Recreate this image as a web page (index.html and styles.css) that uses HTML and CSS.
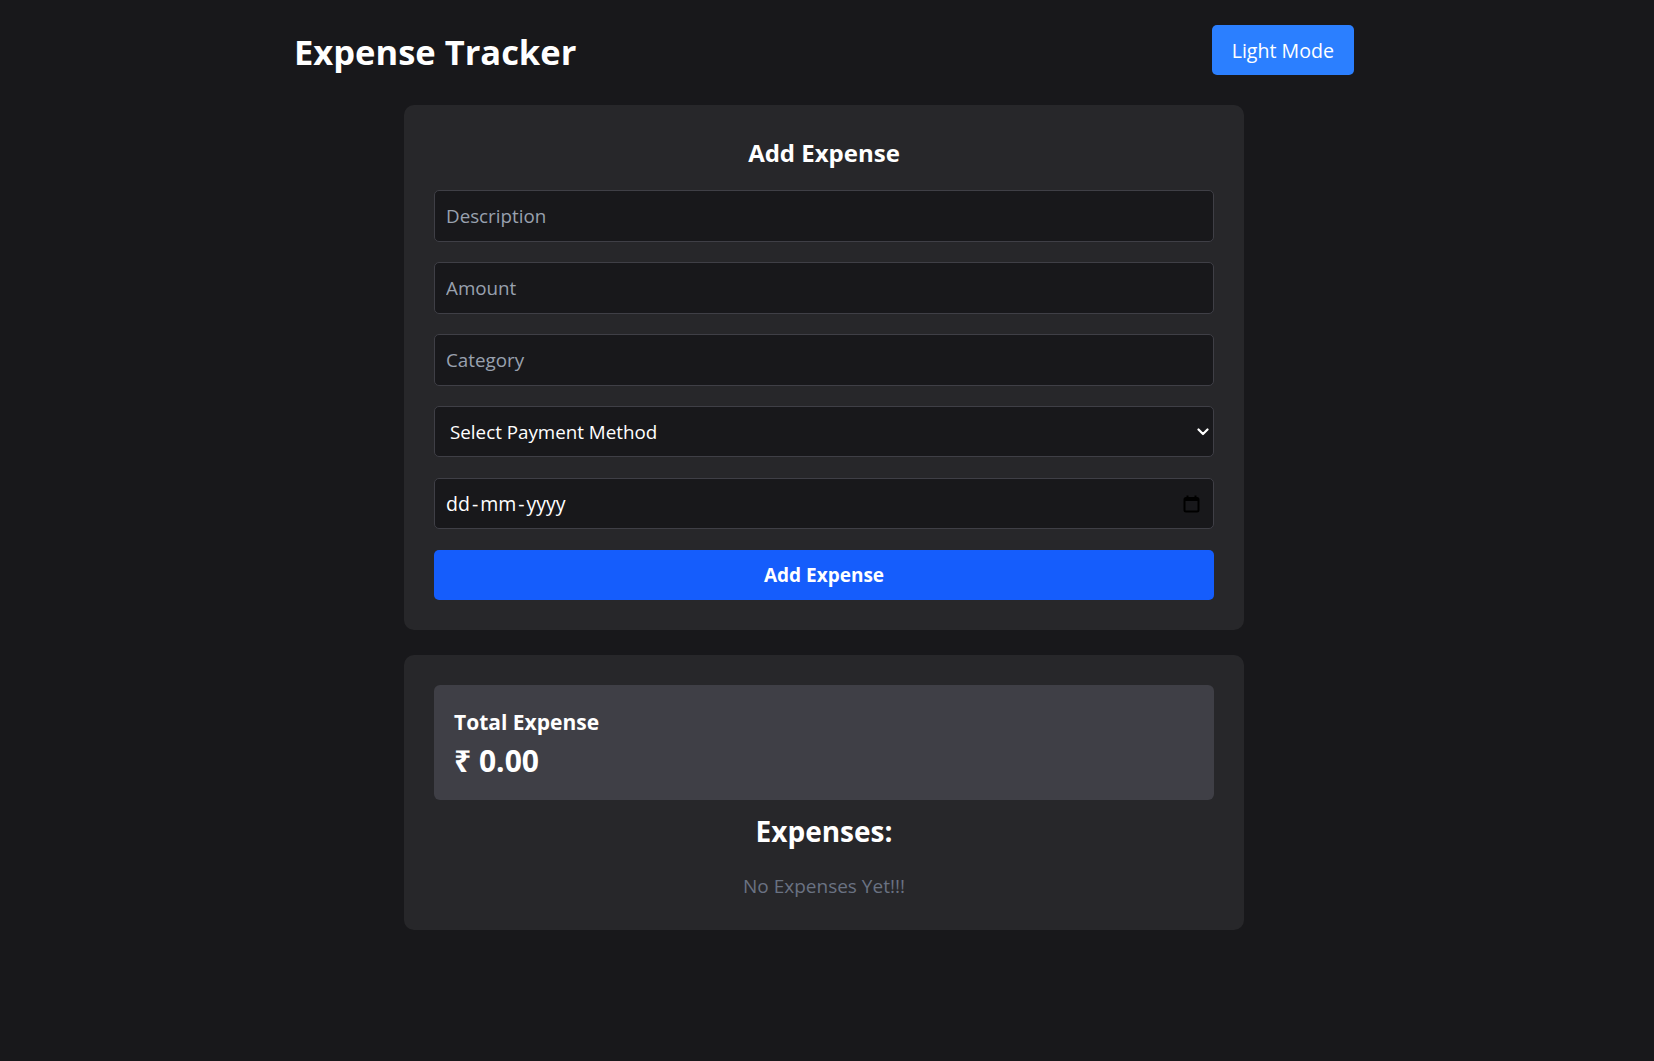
FILE: index.html
```html
<!DOCTYPE html>
<html lang="en">
<head>
<meta charset="utf-8">
<title>Expense Tracker</title>
<link rel="stylesheet" href="styles.css">
</head>
<body>
<div class="page">
  <header class="topbar">
    <h1 class="title">Expense Tracker</h1>
    <button class="mode-btn" type="button">Light Mode</button>
  </header>

  <section class="card form-card">
    <h2 class="card-title">Add Expense</h2>
    <input class="field" type="text" placeholder="Description">
    <input class="field" type="text" placeholder="Amount">
    <input class="field" type="text" placeholder="Category">
    <div class="field select-field">
      <span>Select Payment Method</span>
      <svg class="chev" width="12" height="8" viewBox="0 0 12 8"><path d="M1.5 1.5 L6 6 L10.5 1.5" fill="none" stroke="#fff" stroke-width="2.2" stroke-linecap="round" stroke-linejoin="round"/></svg>
    </div>
    <div class="field date-field">
      <span class="date-text">dd<span class="sep">-</span>mm<span class="sep">-</span>yyyy</span>
      <svg class="cal" width="17" height="18" viewBox="0 0 17 18"><rect x="1.5" y="3" width="14" height="13.5" rx="1.5" fill="none" stroke="#000" stroke-width="2"/><rect x="1.5" y="3" width="14" height="3" fill="#000"/><rect x="3.5" y="0.5" width="2" height="3.5" fill="#000"/><rect x="11.5" y="0.5" width="2" height="3.5" fill="#000"/></svg>
    </div>
    <button class="add-btn" type="button">Add Expense</button>
  </section>

  <section class="card list-card">
    <div class="total-box">
      <div class="total-label">Total Expense</div>
      <div class="total-value">₹ 0.00</div>
    </div>
    <h2 class="list-title">Expenses:</h2>
    <p class="empty">No Expenses Yet!!!</p>
  </section>
</div>
</body>
</html>
```

FILE: styles.css
```css
* { box-sizing: border-box; }
html, body { margin: 0; padding: 0; }
body {
  background: #18181b;
  color: #fff;
  font-family: "Open Sans", "Noto Sans", sans-serif;
  min-height: 100vh;
}
.page {
  padding: 25px 6px 40px 0;
  display: flex;
  flex-direction: column;
  align-items: center;
}
.topbar {
  width: 1060px;
  height: 50px;
  display: flex;
  align-items: center;
  justify-content: space-between;
  margin-bottom: 30px;
}
.title {
  margin: 0;
  font-size: 34.5px;
  font-weight: 700;
  line-height: 1;
  padding-top: 4px;
}
.mode-btn {
  background: #2b7fff;
  color: #fff;
  border: none;
  border-radius: 5px;
  height: 50px;
  padding: 0 20px;
  font-family: inherit;
  font-size: 19.6px;
}
.card {
  width: 840px;
  background: #27272a;
  border-radius: 10px;
  padding: 30px;
}
.form-card {
  display: flex;
  flex-direction: column;
  gap: 20px;
  margin-bottom: 25px;
}
.card-title {
  margin: 0;
  text-align: center;
  font-size: 24px;
  font-weight: 700;
  line-height: 35px;
}
.field {
  height: 52px;
  width: 100%;
  background: #18181b;
  border: 1px solid #3f3f46;
  border-radius: 5px;
  padding: 0 11px;
  font-family: inherit;
  font-size: 18.8px;
  color: #fff;
  outline: none;
}
.field::placeholder { color: #99a1af; }
.select-field, .date-field {
  height: 51px;
  display: flex;
  align-items: center;
  justify-content: space-between;
}
.select-field { padding: 0 4px 0 15px; }
.date-field { padding: 0 13px 0 11px; margin-top: 1px; }
.date-text { font-size: 19.5px; }
.sep { margin: 0 2px; }
.add-btn {
  height: 50px;
  margin-top: 1px;
  background: #155dfc;
  color: #fff;
  border: none;
  border-radius: 5px;
  font-family: inherit;
  font-size: 19px;
  font-weight: 700;
}
.list-card { padding-bottom: 30px; }
.total-box {
  background: #3f3f46;
  border-radius: 6px;
  height: 115px;
  padding: 23px 20px 0;
}
.total-label {
  font-size: 21px;
  font-weight: 700;
  line-height: 28px;
}
.total-value {
  font-size: 30px;
  font-weight: 700;
  line-height: 50px;
}
.list-title {
  margin: 11px 0 0;
  text-align: center;
  font-size: 28px;
  font-weight: 700;
  line-height: 40px;
}
.empty {
  margin: 21px 0 0;
  text-align: center;
  color: #6a7282;
  font-size: 19px;
  line-height: 28px;
}
```
